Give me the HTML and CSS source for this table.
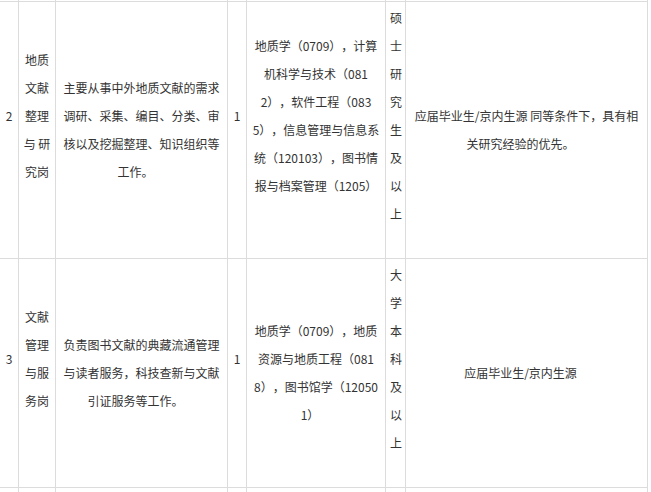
FILE: index.html
```html
<!DOCTYPE html>
<html lang="zh-CN">
<head>
<meta charset="utf-8">
<title>岗位表</title>
<link rel="stylesheet" href="styles.css">
</head>
<body>
<table class="jobs">
  <colgroup>
    <col class="c-no">
    <col class="c-name">
    <col class="c-duty">
    <col class="c-num">
    <col class="c-major">
    <col class="c-edu">
    <col class="c-req">
  </colgroup>
  <tr class="edge"><td></td><td></td><td></td><td></td><td></td><td></td><td></td></tr>
  <tr class="r2">
    <td class="tail">2</td>
    <td class="tail">地质文献整理与 研究岗</td>
    <td class="sp">主要从事中外地质文献的需求调研、采集、编目、分类、审核以及挖掘整理、知识组织等工作。</td>
    <td class="tail">1</td>
    <td class="tail major">地质学（0709），计算机科学与技术（0812），软件工程（0835），信息管理与信息系统（120103），图书情报与档案管理（1205）</td>
    <td class="tail">硕士研究生及以上</td>
    <td class="sp">应届毕业生/京内生源 同等条件下，具有相关研究经验的优先。</td>
  </tr>
  <tr class="r3">
    <td class="tail">3</td>
    <td class="tail">文献管理与服务岗</td>
    <td class="sp">负责图书文献的典藏流通管理与读者服务，科技查新与文献引证服务等工作。</td>
    <td class="tail">1</td>
    <td class="sp major">地质学（0709），地质资源与地质工程（0818），图书馆学（120501）</td>
    <td class="tail">大学本科及以上</td>
    <td class="sp">应届毕业生/京内生源</td>
  </tr>
  <tr class="edge"><td></td><td></td><td></td><td></td><td></td><td></td><td></td></tr>
</table>
</body>
</html>
```
FILE: styles.css
```css
html, body {
  margin: 0;
  padding: 0;
  background: #fff;
  overflow: hidden;
}

.jobs {
  border-collapse: collapse;
  table-layout: fixed;
  width: 648px;
  margin-left: -1px;
  margin-top: -18px;
  font-family: "Noto Sans CJK SC", "Noto Sans", sans-serif;
  font-size: 12px;
  line-height: 28px;
  color: #333;
  text-spacing-trim: space-all;
}

.c-no { width: 19px; }
.c-name { width: 37px; }
.c-duty { width: 172px; }
.c-num { width: 19px; }
.c-major { width: 139px; }
.c-edu { width: 20px; }
.c-req { width: 242px; }

.jobs td {
  border: 1px solid #dcdcdc;
  padding: 2px 4px;
  text-align: center;
  vertical-align: middle;
}

.jobs .edge td {
  height: 18px;
  padding: 0;
}

.jobs td.tail {
  padding-bottom: 30px;
}

.jobs td.sp::after {
  content: "";
  display: inline-block;
  width: 1em;
}

.jobs td.major {
  word-break: break-all;
}
```
